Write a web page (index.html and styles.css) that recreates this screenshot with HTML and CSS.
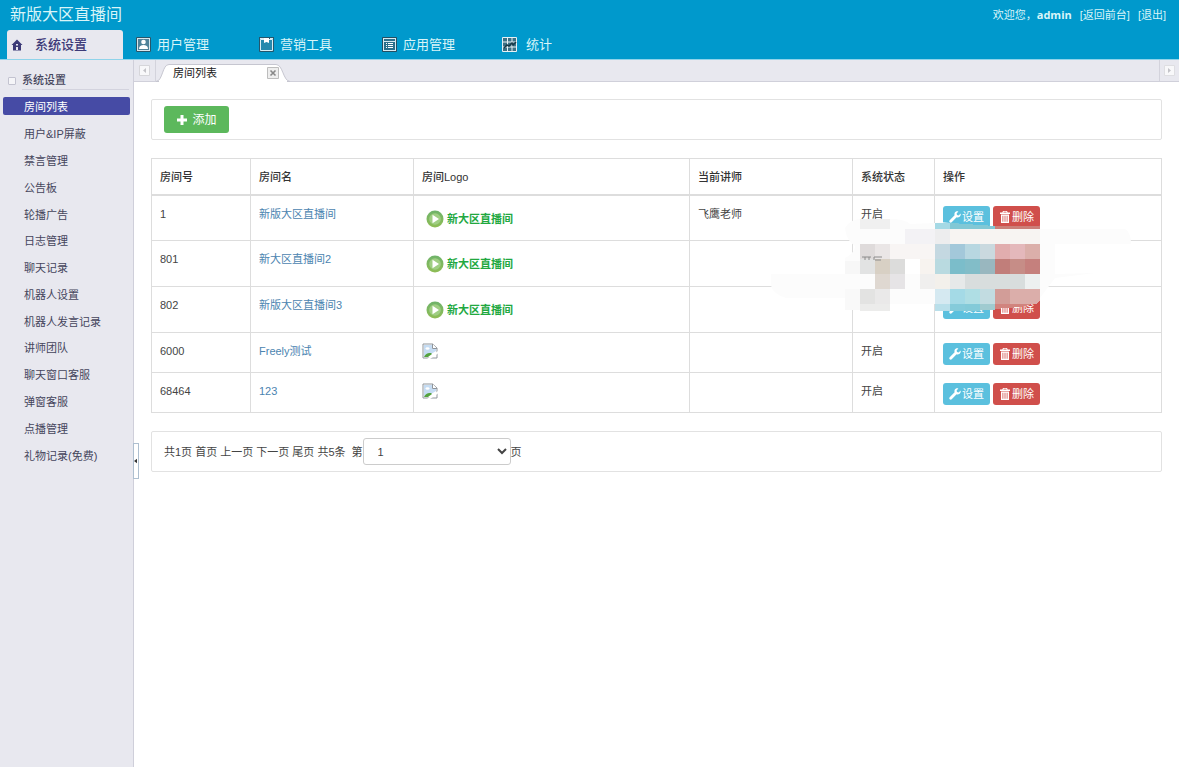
FILE: index.html
```
<!DOCTYPE html>
<html lang="zh-CN">
<head>
<meta charset="utf-8">
<title>新版大区直播间</title>
<link rel="stylesheet" href="styles.css">
</head>
<body>
<svg class="defs" aria-hidden="true">
  <defs>
    <linearGradient id="ball" x1="0" y1="0" x2="0" y2="1"><stop offset="0" stop-color="#6fb36a"/><stop offset="1" stop-color="#8fbd55"/></linearGradient>
    <symbol id="wrench" viewBox="0 0 12 12"><path d="M11.6 2.6 9.7 4.4 8 4 7.6 2.4 9.4.5C7.900 0 6.200.5 5.600 2c-.3.8-.2 1.500 0 2.200L.700 9.200c-.6.6-.6 1.400 0 2 .6.600 1.400.6 2 0l4.900-4.900c.9.300 1.900.2 2.700-.3 1.200-.7 1.700-2.200 1.300-3.400z"/></symbol>
    <symbol id="trash" viewBox="0 0 12 12"><path fill-rule="evenodd" d="M4 0h4l.7 1.500H11V3H1V1.500h2.300zM4.700.8l-.3.700h3.200L7.300.8zM2 3.600h8V12H2zM3.500 4.800v6h.8v-6zM5.600 4.800v6h.8v-6zM7.700 4.800v6h.8v-6z"/></symbol>
    <symbol id="play" viewBox="0 0 18 18"><circle cx="9" cy="9" r="8.500" fill="url(#ball)"/><circle cx="9" cy="9" r="5.800" fill="#9fce83"/><path d="M6.500 4.800 13 9l-6.500 4.200z" fill="#fff"/></symbol>
    <symbol id="broken" viewBox="0 0 16 16"><path d="M1 1h9.500L15 5v10H1z" fill="#fff" stroke="#8f959b"/><path d="M2 2h8v4h4v2L4 14H2z" fill="#c5dcf3"/><path d="M10.500 1v4.500H15" fill="#fff" stroke="#8f959b"/><ellipse cx="5.500" cy="5.500" rx="2" ry="1.200" fill="#fff"/><path d="M2 14c1.500-3.500 4-4.500 7-4l1 1-4 3z" fill="#54a23f"/><path d="M5 16 16 8v2.500L8 16z" fill="#fff"/></symbol>
  </defs>
</svg>
<header class="header">
  <div class="topline">
    <h1 class="brand">新版大区直播间</h1>
    <div class="account"><span>欢迎您，<b>admin</b></span><a href="#">[返回前台]</a><a href="#">[退出]</a></div>
  </div>
  <nav class="nav">
    <a class="nav-item active" href="#"><svg class="icon-home" viewBox="0 0 12 12"><path d="M6 .5 11.500 6H10v5.500H2V6H.5z" fill="#3c3a78"/><path d="M5 8h2v3H5zM5 5h2v1.500H5z" fill="#e8e8ef"/></svg>系统设置</a>
    <a class="nav-item users" href="#"><svg class="icon" viewBox="0 0 15 15"><path d="M.5.5h14v14H.5z" fill="#d9e7ec" stroke="#27566a"/><path d="M2 2h11v11H2z" fill="#4f8299"/><circle cx="7.500" cy="5" r="2.300" fill="#fff"/><path d="M3 12c0-3 2-4 4.500-4S12 9 12 12z" fill="#fff"/></svg>用户管理</a>
    <a class="nav-item tools" href="#"><svg class="icon" viewBox="0 0 15 15"><path d="M1.500 2.500h12v11h-12z" fill="#2489ad" stroke="#d8edf4"/><path d="M14.500 2v12.500H.5V2" fill="none" stroke="#24566c"/><path d="M0 0h15v2H0z" fill="#24566c"/><path d="M1 1h4v1H1zM11 1h3v1h-3z" fill="#d8edf4"/><path d="M5 1h5v5L7.500 5 5 6z" fill="#fff"/></svg>营销工具</a>
    <a class="nav-item apps" href="#"><svg class="icon" viewBox="0 0 15 15"><path d="M.5.5h14v14H.5z" fill="#2a6f8b" stroke="#244f62"/><path d="M1 1.500h13M1 4.500h13M1 13.500h13M1.500 2v11M13.500 2v11" fill="none" stroke="#d7eaf1"/><path d="M4 6.500h1m1 0h5M4 8.500h1m1 0h5M4 10.500h1m1 0h5" stroke="#fff"/></svg>应用管理</a>
    <a class="nav-item stats" href="#"><svg class="icon" viewBox="0 0 15 15"><path d="M.5.5h14v14H.5z" fill="#3b7186" stroke="#e7f1f4"/><path d="M5.500 1v13M10 1v13M1 5h13M1 10h13" stroke="#e7f1f4"/><path d="M2 11 5 8l2 1 3-3 1 2 3-3" fill="none" stroke="#173948" stroke-width="1.500"/></svg>统计</a>
  </nav>
</header>
<div class="body">
  <aside class="sidebar">
    <h2 class="group"><span class="toggle"></span><span class="group-name">系统设置</span></h2>
    <ul class="menu">
      <li><a class="current" href="#">房间列表</a></li>
      <li><a href="#">用户&amp;IP屏蔽</a></li>
      <li><a href="#">禁言管理</a></li>
      <li><a href="#">公告板</a></li>
      <li><a href="#">轮播广告</a></li>
      <li><a href="#">日志管理</a></li>
      <li><a href="#">聊天记录</a></li>
      <li><a href="#">机器人设置</a></li>
      <li><a href="#">机器人发言记录</a></li>
      <li><a href="#">讲师团队</a></li>
      <li><a href="#">聊天窗口客服</a></li>
      <li><a href="#">弹窗客服</a></li>
      <li><a href="#">点播管理</a></li>
      <li><a href="#">礼物记录(免费)</a></li>
    </ul>
    <button class="collapse" type="button" aria-label="收起"><svg viewBox="0 0 4 6"><path d="M4 0v6L0 3z" fill="#333"/></svg></button>
  </aside>
  <main class="main">
    <div class="tabs">
      <button class="scroll" type="button" aria-label="向左"><svg viewBox="0 0 11 11"><path d="M.5.5h10v10H.5z" fill="#f8f8fa" stroke="#d6d6da"/><path d="M7 3v5L4 5.500z" fill="#c3c3c8"/></svg></button>
      <div class="tab">
        <svg class="tab-shape" viewBox="0 0 134 18" preserveAspectRatio="none"><path d="M0 17.500C7 17 6 .5 13 .5h107c7 0 7 16.500 14 17z" fill="#fff" stroke="#c6c6d0"/><path d="M3 17.500h128" stroke="#fff"/></svg>
        <span class="tab-name">房间列表</span>
        <button class="close" type="button" aria-label="关闭"><svg viewBox="0 0 12 12"><path d="M.5.5h11v11H.5z" fill="#eee" stroke="#bdbdbd"/><path d="m3.500 3.500 5 5m0-5-5 5" stroke="#888" stroke-width="1.600"/></svg></button>
      </div>
      <button class="scroll right" type="button" aria-label="向右"><svg viewBox="0 0 11 11"><path d="M.5.5h10v10H.5z" fill="#f8f8fa" stroke="#dedee2"/><path d="M4 3v5l3-2.500z" fill="#c3c3c8"/></svg></button>
    </div>
    <div class="content">
      <div class="panel"><button class="btn add" type="button"><svg viewBox="0 0 12 12"><path d="M4.500 1h3v3.500H11v3H7.500V11h-3V7.500H1v-3h3.500z"/></svg>添加</button></div>
      <div class="table-wrap">
        <table class="rooms">
          <colgroup><col class="c-id"><col class="c-name"><col class="c-logo"><col class="c-teacher"><col class="c-state"><col class="c-action"></colgroup>
          <thead><tr><th>房间号</th><th>房间名</th><th>房间Logo</th><th>当前讲师</th><th>系统状态</th><th>操作</th></tr></thead>
          <tbody>
            <tr class="tall"><td>1</td><td><a href="#">新版大区直播间</a></td><td><span class="logo"><svg><use href="#play"/></svg>新大区直播间</span></td><td>飞鹰老师</td><td>开启</td><td><div class="buttons"><button class="btn info" type="button"><svg><use href="#wrench"/></svg>设置</button><button class="btn danger" type="button"><svg><use href="#trash"/></svg>删除</button></div></td></tr>
            <tr class="tall"><td>801</td><td><a href="#">新大区直播间2</a></td><td><span class="logo"><svg><use href="#play"/></svg>新大区直播间</span></td><td></td><td>开启</td><td><div class="buttons"><button class="btn info" type="button"><svg><use href="#wrench"/></svg>设置</button><button class="btn danger" type="button"><svg><use href="#trash"/></svg>删除</button></div></td></tr>
            <tr class="tall"><td>802</td><td><a href="#">新版大区直播间3</a></td><td><span class="logo"><svg><use href="#play"/></svg>新大区直播间</span></td><td></td><td>开启</td><td><div class="buttons"><button class="btn info" type="button"><svg><use href="#wrench"/></svg>设置</button><button class="btn danger" type="button"><svg><use href="#trash"/></svg>删除</button></div></td></tr>
            <tr class="short"><td>6000</td><td><a href="#">Freely测试</a></td><td><svg class="broken"><use href="#broken"/></svg></td><td></td><td>开启</td><td><div class="buttons"><button class="btn info" type="button"><svg><use href="#wrench"/></svg>设置</button><button class="btn danger" type="button"><svg><use href="#trash"/></svg>删除</button></div></td></tr>
            <tr class="short"><td>68464</td><td><a href="#">123</a></td><td><svg class="broken"><use href="#broken"/></svg></td><td></td><td>开启</td><td><div class="buttons"><button class="btn info" type="button"><svg><use href="#wrench"/></svg>设置</button><button class="btn danger" type="button"><svg><use href="#trash"/></svg>删除</button></div></td></tr>
          </tbody>
        </table>
        <svg class="mosaic" viewBox="770 218 362 94" aria-hidden="true">
          <path d="M860 219h30q15 0 20 5l25-1 5-1 30 3 70 4h85q6 3 6 15h-76v30l40-1-40 5-15 20q-5 6-10 6H860v-6h-74q-15-5-15-14v-10h74v-16q10-5 10-12-9-6-10-18 4-8 15-9z" fill="#fcfcfc"/>
          <g shape-rendering="crispEdges">
            <path d="M860 219h30v10h-30z" fill="#f0f0f0"/>
            <path d="M935 223h15v6h-15z" fill="#a5d9e5"/><path d="M950 223l45 3v3h-45z" fill="#82c8d5"/><path d="M995 226h45v3h-45z" fill="#cc7f78"/>
            <path d="M905 229h30v15h-30z" fill="#f3f2f5"/><path d="M935 229h15v15h-15z" fill="#ededee"/><path d="M950 229h90v15h-90z" fill="#f7f4f2"/>
            <path d="M860 244h15v15h-15z" fill="#dfdbdb"/><path d="M875 244h15v15h-15z" fill="#eae6e6"/><path d="M890 244h45v15h-45z" fill="#f8f5f4"/><path d="M935 244h15v15h-15z" fill="#c4d8e1"/><path d="M950 244h15v15h-15z" fill="#a3c8da"/><path d="M965 244h15v15h-15z" fill="#b8d7e1"/><path d="M980 244h15v15h-15z" fill="#cad9df"/><path d="M995 244h15v15h-15z" fill="#e1adae"/><path d="M1010 244h15v15h-15z" fill="#e4b8bb"/><path d="M1025 244h15v15h-15z" fill="#dbafaa"/>
            <path d="M845 261h15v13h-15z" fill="#f7f7f7"/><path d="M860 259h15v15h-15z" fill="#e2e3e3"/><path d="M875 259h15v15h-15z" fill="#d8d0c4"/><path d="M890 259h15v15h-15z" fill="#dcdcdb"/><path d="M905 259h15v15h-15z" fill="#fff"/><path d="M920 259h15v15h-15z" fill="#f7f3ef"/><path d="M935 259h15v15h-15z" fill="#b9dae0"/><path d="M950 259h15v15h-15z" fill="#7bbdca"/><path d="M965 259h15v15h-15z" fill="#82bdc8"/><path d="M980 259h15v15h-15z" fill="#99b7bf"/><path d="M995 259h15v15h-15z" fill="#c17e7a"/><path d="M1010 259h15v15h-15z" fill="#c68d87"/><path d="M1025 259h15v15h-15z" fill="#c5807d"/>
            <path d="M875 274h15v15h-15z" fill="#dfd8d1"/><path d="M890 274h15v15h-15z" fill="#e6e4e6"/><path d="M920 274h15v15h-15z" fill="#f0efee"/><path d="M935 274h15v15h-15z" fill="#f3f0eb"/><path d="M950 274h15v15h-15z" fill="#e6e9e9"/><path d="M965 274h60v15h-60z" fill="#d8dddd"/><path d="M1025 274h15v15h-15z" fill="#edf0f0"/>
            <path d="M845 289h15v21h-15z" fill="#f9f9f9"/><path d="M860 289h15v15h-15z" fill="#e3e3e2"/><path d="M875 289h15v15h-15z" fill="#eae9e9"/><path d="M935 289h15v15h-15z" fill="#d5e9f1"/><path d="M950 289h15v15h-15z" fill="#a4dae6"/><path d="M965 289h15v15h-15z" fill="#afdee4"/><path d="M980 289h15v15h-15z" fill="#c2dce1"/><path d="M995 289h15v15h-15z" fill="#d29d98"/><path d="M1010 289h30v11l-4 4h-26z" fill="#dbaeaa"/>
            <path d="M860 304h30v7h-30z" fill="#ececeb"/><path d="M935 304h15v7h-15z" fill="#b9dfea"/><path d="M950 304h15v7h-15z" fill="#85cbda"/><path d="M965 304h15v7h-15z" fill="#83cad8"/><path d="M980 304h15v6h-15z" fill="#a0cbd0"/><path d="M995 304h37l-12 3-25 2z" fill="#d1847e"/>
          </g>
          <path d="M862 257h9m3 0h8M865 257v3m4-3v3m5-3v3m1 0h6" fill="none" stroke="#8c8c8c"/>
        </svg>
      </div>
      <div class="panel pager">
        <span>共1页 首页 上一页 下一页 尾页 共5条</span>
        <label class="jump">第<select aria-label="页码"><option>1</option></select>页</label>
      </div>
    </div>
  </main>
</div>
</body>
</html>
```
FILE: styles.css
```
* { box-sizing: border-box; }
body { margin: 0; min-height: 100vh; display: flex; flex-direction: column; background: #fff; color: #444; font: 11px/16px "Liberation Sans", "Noto Sans CJK SC", sans-serif; }
a { color: inherit; text-decoration: none; }
button { font: inherit; padding: 0; border: 0; background: none; }
svg { display: block; flex: none; }
.defs { position: absolute; width: 0; height: 0; }

.header { background: #09c; border-bottom: 1px solid #8fd3ea; color: #d9f5f8; }
.topline { display: flex; justify-content: space-between; align-items: center; height: 30px; padding: 0 13px 0 10px; }
.brand { margin: 0; font-size: 16px; font-weight: 400; line-height: 24px; }
.account { display: flex; gap: 8px; }
.account b { font-family: "Open Sans", sans-serif; }
.nav { display: flex; height: 29px; padding-left: 7px; font-size: 13px; }
.nav-item { display: flex; align-items: center; gap: 6px; padding-left: 13px; }
.nav-item .icon { width: 15px; height: 15px; }
.nav-item.active { width: 116px; padding-left: 4px; gap: 12px; background: #e8e8ef; color: #3c3a78; border-radius: 3px 3px 0 0; font-weight: 500; }
.icon-home { width: 12px; height: 12px; }
.users, .tools { width: 123px; }
.apps { width: 120px; }
.nav-item.stats { gap: 9px; }

.body { flex: 1; display: flex; }
.sidebar { position: relative; width: 134px; flex: none; padding-top: 11px; background: #e8e8ef; border-right: 1px solid #cfcfda; color: #45455c; }
.group { display: flex; align-items: center; gap: 6px; margin: 0 4px 3px 8px; font-size: 11px; font-weight: 500; }
.toggle { width: 8px; height: 8px; border: 1px solid #c3c3d0; border-radius: 1px; background: #f5f5f8; }
.group-name { flex: 1; line-height: 18px; border-bottom: 1px solid #d3d3de; }
.menu { display: flex; flex-direction: column; height: 375px; margin: 0; padding: 0 3px; list-style: none; }
.menu li { flex: 1; display: flex; align-items: center; }
.menu a { flex: 1; padding: 2px 0 0 21px; line-height: 16px; border-radius: 2px; }
.menu .current { background: #464ba5; color: #fff; }
.collapse { position: absolute; left: 133px; top: 383px; width: 6px; height: 36px; border: 1px solid #aebfd0; background: #fff; z-index: 1; }
.collapse svg { width: 3px; height: 6px; }

.main { flex: 1; min-width: 0; }
.tabs { display: flex; height: 22px; background: #e8e8ef; border-bottom: 1px solid #d0d0da; }
.scroll { display: flex; align-items: center; justify-content: center; width: 22px; border-right: 1px solid #d3d3dc; }
.scroll svg { width: 11px; height: 11px; }
.scroll.right { width: 20px; margin-left: auto; border-right: 0; border-left: 1px solid #d3d3dc; }
.tab { position: relative; display: flex; align-items: center; justify-content: space-between; width: 134px; height: 18px; margin-top: 4px; padding: 0 11px 0 17px; color: #222; }
.tab-shape { position: absolute; inset: 0; width: 100%; height: 100%; }
.tab-name, .close { position: relative; }
.close svg { width: 12px; height: 12px; }

.content { display: flex; flex-direction: column; gap: 18px; padding: 17px 17px 0; }
.panel { display: flex; align-items: center; min-height: 41px; padding: 0 12px; border: 1px solid #e2e2e2; border-radius: 2px; }
.btn { display: inline-flex; align-items: center; justify-content: center; color: #fff; border-radius: 3px; }
.btn svg { width: 12px; height: 12px; fill: #fff; }
.btn.add { gap: 4px; width: 65px; height: 27px; background: #5cb85c; font-size: 12px; }
.btn.info, .btn.danger { gap: 1px; width: 47px; height: 22px; background: #5bc0de; }
.btn.danger { background: #d04f4b; }

.table-wrap { position: relative; }
.rooms { width: 100%; table-layout: fixed; border-collapse: collapse; }
.c-id { width: 99px; }
.c-name { width: 163px; }
.c-logo { width: 276px; }
.c-teacher { width: 163px; }
.c-state { width: 82px; }
.rooms th, .rooms td { border: 1px solid #ddd; padding: 10px 9px 0 8px; text-align: left; vertical-align: top; }
.rooms th { height: 36px; border-bottom-width: 2px; color: #333; font-weight: 500; }
.rooms .short { height: 40px; }
.rooms .tall { height: 46px; }
.rooms td a { color: #4b84b0; }
.buttons { display: flex; gap: 3px; }
.logo { display: flex; align-items: center; gap: 3px; margin: 4px 0 0 4px; color: #22a83f; font-weight: 700; }
.logo svg { width: 18px; height: 18px; }
.broken { width: 16px; height: 16px; }
.mosaic { position: absolute; left: 619px; top: 60px; width: 362px; height: 94px; }
.pager { gap: 6px; }
.jump { display: flex; align-items: center; }
.jump select { width: 148px; height: 27px; padding: 0 0 0 10px; border: 1px solid #ccc; border-radius: 3px; background: #fff; color: #444; font: inherit; }
```
